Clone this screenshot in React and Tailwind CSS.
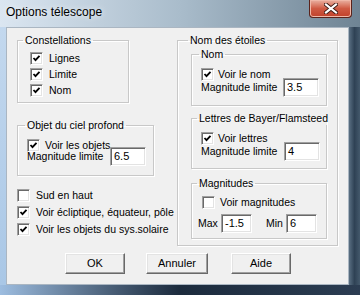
import React from "react"

function CheckBox({ checked }) {
  return (
    <span className="relative flex h-[13px] w-[13px] shrink-0 items-center justify-center border border-t-[#a0a0a0] border-l-[#a0a0a0] border-b-white border-r-white bg-white shadow-[inset_1px_1px_0_#696969,inset_-1px_-1px_0_#e3e3e3]">
      {checked && (
        <svg width="9" height="9" viewBox="0 0 9 9">
          <path d="M1.5 4 L3.5 6.2 L7.5 1.8" fill="none" stroke="#000" strokeWidth="1.8" />
        </svg>
      )}
    </span>
  )
}

function Check({ checked, label, gap = "gap-[6px]" }) {
  return (
    <div className={`flex h-[13px] items-center ${gap}`}>
      <CheckBox checked={checked} />
      <span className="whitespace-nowrap leading-[13px]">{label}</span>
    </div>
  )
}

function Field({ value, w = "w-[36px]" }) {
  return (
    <div
      className={`${w} h-[19px] shrink-0 border border-t-[#a0a0a0] border-l-[#a0a0a0] border-b-white border-r-white bg-white pl-[3px] text-[11px] leading-[17px] shadow-[inset_1px_1px_0_#696969,inset_-1px_-1px_0_#e3e3e3]`}
    >
      {value}
    </div>
  )
}

function Group({ title, className = "", legend = "ml-[5px]", children }) {
  return (
    <fieldset
      className={`m-0 min-w-0 border border-[#c8c8c8] p-0 shadow-[inset_1px_1px_0_#fff,1px_1px_0_#fff] ${className}`}
    >
      <legend className={`${legend} whitespace-nowrap px-[2px] leading-[13px]`}>{title}</legend>
      {children}
    </fieldset>
  )
}

function Button({ children, w }) {
  return (
    <button
      className={`${w} h-[21px] border border-t-white border-l-white border-b-[#696969] border-r-[#696969] bg-[#f0f0f0] text-[11px] leading-[19px] text-black shadow-[inset_-1px_-1px_0_#a0a0a0,inset_1px_1px_0_#e3e3e3]`}
    >
      {children}
    </button>
  )
}

export default function App() {
  return (
    <div className="flex h-[295px] w-[360px] flex-col overflow-hidden bg-[#8397a8] font-['Liberation_Sans',Arial,sans-serif] text-[10.5px] text-black">
      <div className="flex h-[27px] shrink-0 bg-linear-to-r from-[#dbe6f1] via-[#a9bccb] to-[#6f8494]">
        <span className="pl-[6px] pt-[5px] text-[12px] leading-[15px] text-black [text-shadow:0_0_6px_#fff]">
          Options télescope
        </span>
        <div className="ml-auto mr-[8px] flex h-[18px] w-[43px] items-center justify-center rounded-b-[4px] border border-t-0 border-[#5a231b] bg-linear-to-b from-[#e9b1a2] via-[#cf5a43] to-[#c0402a] shadow-[inset_0_0_0_1px_#f0b8a8]">
          <svg width="14" height="11" viewBox="0 0 14 11">
            <path d="M2 1.5 L12 9.5 M12 1.5 L2 9.5" stroke="#3c1a14" strokeWidth="4" strokeLinecap="square" />
            <path d="M2 1.5 L12 9.5 M12 1.5 L2 9.5" stroke="#fff" strokeWidth="2.2" strokeLinecap="square" />
          </svg>
        </div>
      </div>
      <div className="flex h-[258px] shrink-0">
        <div className="w-[6px] bg-linear-to-b from-[#c3d8ee] to-[#a9c7e6]" />
        <div className="flex w-[343px] flex-col border border-[#aab6c2] bg-[#f0f0f0] pl-[10px] pt-[6px]">
          <div className="flex h-[212px] gap-[23px]">
            <div className="flex w-[137px] flex-col">
              <Group title="Constellations" className="h-[69px] w-[112px]" legend="ml-[5px]">
                <div className="flex flex-col gap-[3px] pl-[12px] pt-[5px]">
                  <Check checked label="Lignes" />
                  <Check checked label="Limite" />
                  <Check checked label="Nom" />
                </div>
              </Group>
              <Group title="Objet du ciel profond" className="mt-[16px] h-[57px] w-[137px]" legend="ml-[7px]">
                <div className="flex flex-col pl-[9px] pt-[7px]">
                  <Check checked label="Voir les objets" gap="gap-[5px]" />
                  <div className="-mt-[5px] flex items-center">
                    <span className="w-[83px] leading-[13px]">Magnitude limite</span>
                    <Field value="6.5" />
                  </div>
                </div>
              </Group>
              <div className="mt-[13px] flex flex-col gap-[4px]">
                <Check label="Sud en haut" />
                <Check checked label="Voir écliptique, équateur, pôle" />
                <Check checked label="Voir les objets du sys.solaire" />
              </div>
            </div>
            <Group title="Nom des étoiles" className="h-[212px] w-[161px]" legend="ml-[10px]">
              <div className="flex flex-col pl-[13px]">
                <Group title="Nom" className="mt-[1px] h-[58px] w-[136px]" legend="ml-[7px]">
                  <div className="flex flex-col pl-[9px] pt-[7px]">
                    <Check checked label="Voir le nom" gap="gap-[4px]" />
                    <div className="-mt-[3px] flex items-center">
                      <span className="w-[82px] leading-[13px]">Magnitude limite</span>
                      <Field value="3.5" />
                    </div>
                  </div>
                </Group>
                <Group title="Lettres de Bayer/Flamsteed" className="mt-[6px] h-[57px] w-[136px]" legend="ml-[5px]">
                  <div className="flex flex-col pl-[9px] pt-[7px]">
                    <Check checked label="Voir lettres" gap="gap-[4px]" />
                    <div className="-mt-[3px] flex items-center">
                      <span className="w-[83px] leading-[13px]">Magnitude limite</span>
                      <Field value="4" />
                    </div>
                  </div>
                </Group>
                <Group title="Magnitudes" className="mt-[8px] h-[62px] w-[136px]" legend="ml-[5px]">
                  <div className="flex flex-col pt-[6px]">
                    <div className="pl-[10px]">
                      <Check label="Voir magnitudes" gap="gap-[5px]" />
                    </div>
                    <div className="mt-[5px] flex items-center pl-[6px]">
                      <span className="w-[23px] leading-[13px]">Max</span>
                      <Field value="-1.5" w="w-[31px]" />
                      <span className="ml-[14px] w-[20px] leading-[13px]">Min</span>
                      <Field value="6" w="w-[31px]" />
                    </div>
                  </div>
                </Group>
              </div>
            </Group>
          </div>
          <div className="mt-[7px] flex pl-[48px]">
            <Button w="w-[60px]">OK</Button>
            <div className="w-[21px]" />
            <Button w="w-[62px]">Annuler</Button>
            <div className="w-[23px]" />
            <Button w="w-[60px]">Aide</Button>
          </div>
        </div>
        <div className="w-[11px] bg-linear-to-r from-[#5a6f82] via-[#2f4255] to-[#44596c]" />
      </div>
      <div className="h-[10px] shrink-0 bg-linear-to-r from-[#9dbde0] via-[#1c2b3d] to-[#2c3d52]" />
    </div>
  )
}
